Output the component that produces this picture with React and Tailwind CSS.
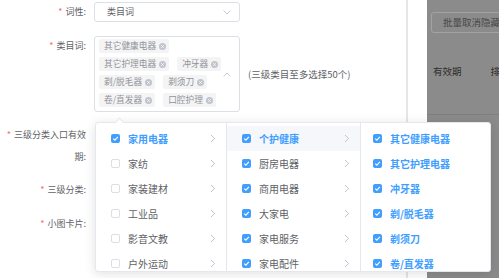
import React from 'react';

const tags = ['其它健康电器', '其它护理电器', '冲牙器', '剃/脱毛器', '剃须刀', '卷/直发器', '口腔护理'];

const col1 = [
  { name: '家用电器', checked: true, active: true },
  { name: '家纺' },
  { name: '家装建材' },
  { name: '工业品' },
  { name: '影音文教' },
  { name: '户外运动' },
];
const col2 = ['个护健康', '厨房电器', '商用电器', '大家电', '家电服务', '家电配件'];
const col3 = ['其它健康电器', '其它护理电器', '冲牙器', '剃/脱毛器', '剃须刀', '卷/直发器'];

const Check = ({ on }) =>
  on ? (
    <span className="w-[9px] h-[9px] rounded-[2px] bg-[#409eff] flex items-center justify-center shrink-0">
      <svg width="7" height="7" viewBox="0 0 8 8">
        <path d="M1.4 4.1 L3.3 5.9 L6.7 2.2" fill="none" stroke="#fff" strokeWidth="1.3" />
      </svg>
    </span>
  ) : (
    <span className="w-[9px] h-[9px] rounded-[2px] border border-[#dcdfe6] bg-white shrink-0" />
  );

const Arrow = () => (
  <svg width="6" height="9" viewBox="0 0 6 9" className="shrink-0">
    <path d="M1 1 L4.6 4.5 L1 8" fill="none" stroke="#c0c4cc" strokeWidth="1" />
  </svg>
);

const Label = ({ children }) => (
  <div className="w-[86px] shrink-0 text-right text-[9px] leading-[20px] text-[#606266]">
    <span className="text-[#f56c6c] mr-[3px]">*</span>
    {children}
  </div>
);

export default function App() {
  return (
    <div
      className="relative w-[499px] h-[278px] overflow-hidden flex bg-white"
      style={{ fontFamily: '"Noto Sans CJK SC", "Noto Sans", sans-serif' }}
    >
      {/* form */}
      <div className="w-[406px] shrink-0 flex flex-col">
        <div className="flex mt-[2px] gap-[8px]">
          <Label>词性:</Label>
          <div className="w-[146px] h-[20px] border border-[#dcdfe6] rounded-[3px] flex items-center justify-between pl-[12px] pr-[8px] text-[9px] text-[#606266]">
            <span>类目词</span>
            <svg width="8" height="5" viewBox="0 0 8 5">
              <path d="M0.5 0.5 L4 4 L7.5 0.5" fill="none" stroke="#c0c4cc" strokeWidth="0.9" />
            </svg>
          </div>
        </div>

        <div className="flex mt-[14px] gap-[8px]">
          <Label>类目词:</Label>
          <div className="w-[146px] h-[76px] border border-[#dcdfe6] rounded-[3px] flex items-center justify-between pl-[4px] pr-[8px]">
            <div className="w-[124px] flex flex-wrap gap-x-[8px] gap-y-[4px] self-start mt-[2px]">
              {tags.map((t) => (
                <span
                  key={t}
                  className="h-[14px] bg-[#f4f4f5] rounded-[2px] flex items-center gap-[3px] pl-[5px] pr-[3px] text-[8.7px] leading-none text-[#909399]"
                >
                  {t}
                  <span className="w-[7px] h-[7px] rounded-full bg-[#c0c4cc] flex items-center justify-center">
                    <svg width="5" height="5" viewBox="0 0 5 5">
                      <path d="M1.2 1.2 L3.8 3.8 M3.8 1.2 L1.2 3.8" stroke="#fff" strokeWidth="0.8" />
                    </svg>
                  </span>
                </span>
              ))}
            </div>
            <svg width="8" height="5" viewBox="0 0 8 5">
              <path d="M0.5 4.5 L4 1 L7.5 4.5" fill="none" stroke="#c0c4cc" strokeWidth="0.9" />
            </svg>
          </div>
          <div className="self-center text-[9.5px] text-[#606266]">(三级类目至多选择50个)</div>
        </div>

        <div className="flex mt-[12px]">
          <div className="w-[86px] shrink-0 text-right text-[9px] leading-[22px] text-[#606266]">
            <div>
              <span className="text-[#f56c6c] mr-[3px]">*</span>三级分类入口有效
            </div>
            <div>期:</div>
          </div>
        </div>

        <div className="flex mt-[12px]">
          <Label>三级分类:</Label>
        </div>
        <div className="flex mt-[14px]">
          <Label>小图卡片:</Label>
        </div>
      </div>

      <div className="w-[2px] shrink-0 bg-[#e6e6e6]" />
      <div className="w-[19px] shrink-0 bg-white" />

      {/* masked page */}
      <div className="flex-1 bg-[#8b8b8b] flex flex-col pl-[4px] pt-[12px] overflow-hidden">
        <div className="h-[21px] w-[80px] shrink-0 border border-[#a3a3a3] rounded-[3px] flex items-center pl-[11px] text-[9.5px] text-[#474747] whitespace-nowrap">
          批量取消隐藏
        </div>
        <div className="flex mt-[31px] text-[9.5px] text-[#2b2b2b] whitespace-nowrap">
          <span className="pl-[2px]">有效期</span>
          <span className="ml-[29px]">排</span>
        </div>
        <div className="mt-[36px] -ml-[4px] h-px bg-[#7f7f7f]" />
      </div>

      {/* cascader dropdown */}
      <div className="absolute left-[95px] top-[122px] w-[396px] h-[150px] bg-white border border-[#e4e7ed] rounded-[3px] shadow-[0_2px_12px_rgba(0,0,0,0.12)] flex">
        <div className="absolute -top-[4px] left-[20px] w-[7px] h-[7px] bg-white border-l border-t border-[#e4e7ed] rotate-45" />
        <div className="w-[131px] py-[3px] border-r border-[#e4e7ed]">
          {col1.map((it) => (
            <div key={it.name} className="h-[25px] flex items-center pl-[15px] pr-[10px]">
              <Check on={it.checked} />
              <span
                className={`ml-[8px] flex-1 text-[10px] ${it.active ? 'text-[#409eff] font-bold' : 'text-[#606266]'}`}
              >
                {it.name}
              </span>
              <Arrow />
            </div>
          ))}
        </div>
        <div className="w-[134px] py-[3px] border-r border-[#e4e7ed]">
          {col2.map((n, i) => (
            <div
              key={n}
              className={`h-[25px] flex items-center pl-[15px] pr-[10px] ${i === 0 ? 'bg-[#f5f7fa]' : ''}`}
            >
              <Check on />
              <span className={`ml-[8px] flex-1 text-[10px] ${i === 0 ? 'text-[#409eff] font-bold' : 'text-[#606266]'}`}>
                {n}
              </span>
              <Arrow />
            </div>
          ))}
        </div>
        <div className="flex-1 py-[3px]">
          {col3.map((n) => (
            <div key={n} className="h-[25px] flex items-center pl-[12px]">
              <Check on />
              <span className="ml-[8px] text-[10px] text-[#409eff] font-bold">{n}</span>
            </div>
          ))}
        </div>
      </div>
    </div>
  );
}
